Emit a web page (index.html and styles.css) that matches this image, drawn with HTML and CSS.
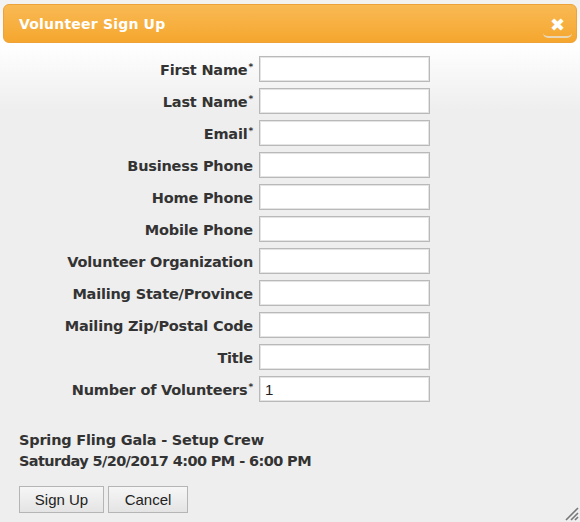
FILE: index.html
```html
<!DOCTYPE html>
<html>
<head>
<meta charset="utf-8">
<link rel="stylesheet" href="styles.css">
</head>
<body>
<div class="dialog">
  <div class="titlebar">
    <span class="title">Volunteer Sign Up</span>
    <span class="close">&#x2716;</span>
  </div>
  <div class="content">
    <form class="form">
      <label class="lbl">First Name<sup>*</sup></label><input class="inp" type="text">
      <label class="lbl">Last Name<sup>*</sup></label><input class="inp" type="text">
      <label class="lbl">Email<sup>*</sup></label><input class="inp" type="text">
      <label class="lbl">Business Phone</label><input class="inp" type="text">
      <label class="lbl">Home Phone</label><input class="inp" type="text">
      <label class="lbl">Mobile Phone</label><input class="inp" type="text">
      <label class="lbl">Volunteer Organization</label><input class="inp" type="text">
      <label class="lbl">Mailing State/Province</label><input class="inp" type="text">
      <label class="lbl">Mailing Zip/Postal Code</label><input class="inp" type="text">
      <label class="lbl">Title</label><input class="inp" type="text">
      <label class="lbl">Number of Volunteers<sup>*</sup></label><input class="inp" type="text" value="1">
    </form>
    <div class="event">
      <div>Spring Fling Gala - Setup Crew</div>
      <div class="when">Saturday 5/20/2017 4:00 PM - 6:00 PM</div>
    </div>
    <div class="buttons">
      <button class="btn btn-sign" type="button">Sign Up</button>
      <button class="btn btn-cancel" type="button">Cancel</button>
    </div>
  </div>
  <svg class="grip" width="16" height="16" viewBox="0 0 16 16">
    <path d="M15 3 L3 15 M15 8 L8 15 M15 12 L12 15" stroke="#777" stroke-width="1.6" fill="none"/>
  </svg>
</div>
</body>
</html>
```
FILE: styles.css
```css
html, body {
  margin: 0;
  padding: 0;
}
body {
  width: 580px;
  height: 522px;
  background: #eeeeee;
  font-family: "DejaVu Sans", Verdana, sans-serif;
  overflow: hidden;
}
.dialog {
  position: relative;
  width: 580px;
  height: 522px;
  box-sizing: border-box;
  padding: 4px 3px 0 3px;
  background: linear-gradient(#f2f2f2 0px, #f2f2f2 4px, #ffffff 44px, #eeeeee 110px, #eeeeee 100%);
}
.titlebar {
  height: 39px;
  box-sizing: border-box;
  border: 1px solid #eda33a;
  border-radius: 6px;
  background: linear-gradient(#f9b954, #f5a72e);
  display: flex;
  align-items: center;
  justify-content: space-between;
  padding: 0 4px 0 15px;
}
.title {
  color: #fff;
  font-weight: bold;
  font-size: 14px;
  letter-spacing: 0.2px;
  margin-top: 1px;
}
.close {
  color: #fff;
  font-size: 18px;
  font-weight: bold;
  width: 29px;
  height: 26px;
  line-height: 26px;
  text-align: center;
  box-sizing: border-box;
  border-bottom: 2px solid #e9d6b4;
  border-radius: 0 0 5px 5px;
  margin-top: 3px;
}
.content {
  padding: 13px 0 0 16px;
}
.form {
  display: grid;
  grid-template-columns: 234px 171px;
  column-gap: 6px;
  row-gap: 6px;
  align-items: center;
  margin: 0;
}
.lbl {
  text-align: right;
  font-weight: bold;
  font-size: 14.5px;
  color: #333;
  letter-spacing: -0.2px;
  white-space: nowrap;
  padding-top: 1px;
}
.lbl sup {
  font-size: 9px;
  vertical-align: 5px;
  line-height: 0;
  margin-left: 1px;
}
.inp {
  height: 26px;
  box-sizing: border-box;
  border: 1px solid #b9b9b9;
  box-shadow: inset 0 0 0 1px #e4e4e4;
  background: #fff;
  margin: 0;
  padding: 2px 5px;
  font-family: "Liberation Sans", Arial, sans-serif;
  font-size: 15px;
  color: #222;
  outline: none;
}
.event {
  margin-top: 28px;
  font-weight: bold;
  font-size: 14.5px;
  color: #333;
  line-height: 21px;
  letter-spacing: -0.2px;
}
.when {
  letter-spacing: -0.6px;
}
.buttons {
  margin-top: 14px;
  display: flex;
  gap: 4px;
}
.btn {
  height: 27px;
  box-sizing: border-box;
  border: 1px solid #b5b5b5;
  background: linear-gradient(#f6f6f6, #e4e4e4);
  font-family: "Liberation Sans", Arial, sans-serif;
  font-size: 15px;
  color: #222;
  padding: 0;
  margin: 0;
}
.btn-sign { width: 85px; }
.btn-cancel { width: 80px; }
.grip {
  position: absolute;
  right: 1px;
  bottom: 1px;
}
```
